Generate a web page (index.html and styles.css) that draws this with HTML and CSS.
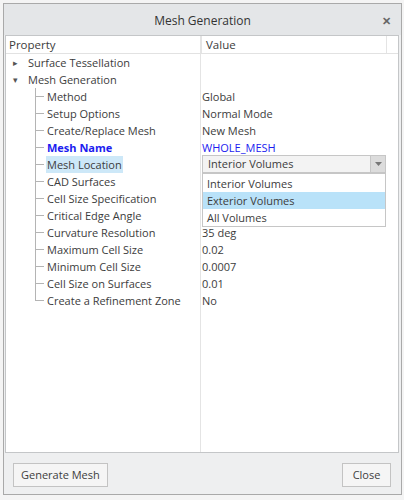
FILE: index.html
```html
<!DOCTYPE html>
<html lang="en">
<head>
  <meta charset="UTF-8">
  <title>Mesh Generation</title>
  <link rel="stylesheet" href="styles.css">
</head>
<body>
  <div class="dialog">
    <div class="titlebar">
      <span class="title">Mesh Generation</span>
      <span class="close-x">&#x2715;</span>
    </div>

    <div class="grid">
      <div class="row head">
        <div class="cell name">Property</div>
        <div class="cell value">Value</div>
        <div class="cell pad"></div>
      </div>

      <div class="rows">
        <div class="row">
          <div class="cell name"><span class="exp">&#9656;</span>Surface Tessellation</div>
          <div class="cell value"></div>
        </div>
        <div class="row">
          <div class="cell name"><span class="exp">&#9662;</span>Mesh Generation</div>
          <div class="cell value"></div>
        </div>
        <div class="row">
          <div class="cell name"><span class="branch"></span>Method</div>
          <div class="cell value">Global</div>
        </div>
        <div class="row">
          <div class="cell name"><span class="branch"></span>Setup Options</div>
          <div class="cell value">Normal Mode</div>
        </div>
        <div class="row">
          <div class="cell name"><span class="branch"></span>Create/Replace Mesh</div>
          <div class="cell value">New Mesh</div>
        </div>
        <div class="row">
          <div class="cell name"><span class="branch"></span><b class="blue">Mesh Name</b></div>
          <div class="cell value blue">WHOLE_MESH</div>
        </div>
        <div class="row">
          <div class="cell name"><span class="branch"></span><span class="picked">Mesh Location</span></div>
          <div class="cell value">
            <div class="combo">
              <span class="combo-text">Interior Volumes</span>
              <span class="combo-btn"><svg width="7" height="4" viewBox="0 0 7 4"><path d="M0 0h7L3.5 4z" fill="#777"/></svg></span>
              <div class="menu">
                <div class="opt">Interior Volumes</div>
                <div class="opt on">Exterior Volumes</div>
                <div class="opt">All Volumes</div>
              </div>
            </div>
          </div>
        </div>
        <div class="row">
          <div class="cell name"><span class="branch"></span>CAD Surfaces</div>
          <div class="cell value"></div>
        </div>
        <div class="row">
          <div class="cell name"><span class="branch"></span>Cell Size Specification</div>
          <div class="cell value"></div>
        </div>
        <div class="row">
          <div class="cell name"><span class="branch"></span>Critical Edge Angle</div>
          <div class="cell value"></div>
        </div>
        <div class="row">
          <div class="cell name"><span class="branch"></span>Curvature Resolution</div>
          <div class="cell value">35 deg</div>
        </div>
        <div class="row">
          <div class="cell name"><span class="branch"></span>Maximum Cell Size</div>
          <div class="cell value">0.02</div>
        </div>
        <div class="row">
          <div class="cell name"><span class="branch"></span>Minimum Cell Size</div>
          <div class="cell value">0.0007</div>
        </div>
        <div class="row">
          <div class="cell name"><span class="branch"></span>Cell Size on Surfaces</div>
          <div class="cell value">0.01</div>
        </div>
        <div class="row">
          <div class="cell name"><span class="branch last"></span>Create a Refinement Zone</div>
          <div class="cell value">No</div>
        </div>
      </div>
    </div>

    <div class="footer">
      <button class="btn">Generate Mesh</button>
      <button class="btn">Close</button>
    </div>
  </div>
</body>
</html>
```

FILE: styles.css
```css
body {
  margin: 0;
  padding: 3px 2px 4px 3px;
  background: #f4f4f4;
  font-family: "Open Sans", "Noto Sans", sans-serif;
  font-size: 11px;
  color: #3c3c3c;
}
.dialog {
  height: 492px;
  box-sizing: border-box;
  border: 1px solid #a9a9a9;
  background: #eeeff0;
  display: flex;
  flex-direction: column;
}
.titlebar {
  height: 31px;
  display: flex;
  align-items: center;
  justify-content: center;
  position: relative;
  background: #e4e6e8;
}
.title {
  font-size: 12px;
  color: #333;
  margin-top: 2px;
}
.close-x {
  position: absolute;
  right: 10px;
  top: 9px;
  font-size: 11px;
  font-weight: bold;
  color: #666;
}
.grid {
  margin: 0 2px 0 1px;
  height: 418px;
  box-sizing: border-box;
  border: 1px solid #c4c6c8;
  background: #fff;
  background-image: linear-gradient(#e4e4e4, #e4e4e4);
  background-size: 1px 100%;
  background-position: 194px 0;
  background-repeat: no-repeat;
}
.row {
  display: grid;
  grid-template-columns: 195px 185px 1fr;
  height: 17px;
  line-height: 17px;
}
.row.head {
  height: 17px;
  line-height: 17px;
  border-bottom: 1px solid #e2e2e2;
  font-size: 11.5px;
}
.head .name {
  padding-left: 3px;
}
.head .value {
  padding-left: 4px;
  border-left: 1px solid #e4e4e4;
}
.head .pad {
  border-left: 1px solid #e4e4e4;
}
.cell {
  white-space: nowrap;
}
.name {
  display: flex;
  align-items: center;
  padding-left: 7px;
}
.exp {
  width: 15px;
  font-size: 9px;
  color: #555;
}
.branch {
  width: 10px;
  height: 17px;
  margin-left: 22px;
  margin-right: 2px;
  background:
    linear-gradient(#b4b4b4, #b4b4b4) 0 0 / 1px 100% no-repeat,
    linear-gradient(#b4b4b4, #b4b4b4) 0 8px / 9px 1px no-repeat;
}
.branch.last {
  background:
    linear-gradient(#b4b4b4, #b4b4b4) 0 0 / 1px 9px no-repeat,
    linear-gradient(#b4b4b4, #b4b4b4) 0 8px / 9px 1px no-repeat;
}
.value {
  padding-left: 1px;
}
.blue {
  color: #1c1cf0;
}
.picked {
  background: #cde8f8;
  padding: 0 1px;
  margin-left: -1px;
}
.combo {
  position: relative;
  height: 18px;
  margin-top: -1px;
  box-sizing: border-box;
  border: 1px solid #c6c6c6;
  background: #f3f3f3;
  display: flex;
}
.combo-text {
  flex: 1;
  padding-left: 5px;
  line-height: 16px;
}
.combo-btn {
  width: 14px;
  background: #dcdcdc;
  border-left: 1px solid #c6c6c6;
  display: flex;
  align-items: center;
  justify-content: center;
}
.menu {
  position: absolute;
  top: 17px;
  left: -1px;
  right: -1px;
  border: 1px solid #c6c6c6;
  background: #fff;
  padding: 1px 0 0;
}
.opt {
  height: 17px;
  line-height: 17px;
  padding-left: 4px;
}
.opt.on {
  background: #b9e2f9;
}
.footer {
  flex: 1;
  display: flex;
  justify-content: space-between;
  align-items: center;
  padding: 2px 10px 0 9px;
}
.btn {
  font-family: inherit;
  font-size: 11px;
  color: #404040;
  background: #f5f5f5;
  border: 1px solid #c3c3c3;
  height: 24px;
  min-width: 49px;
  padding: 0 7px;
}
```
